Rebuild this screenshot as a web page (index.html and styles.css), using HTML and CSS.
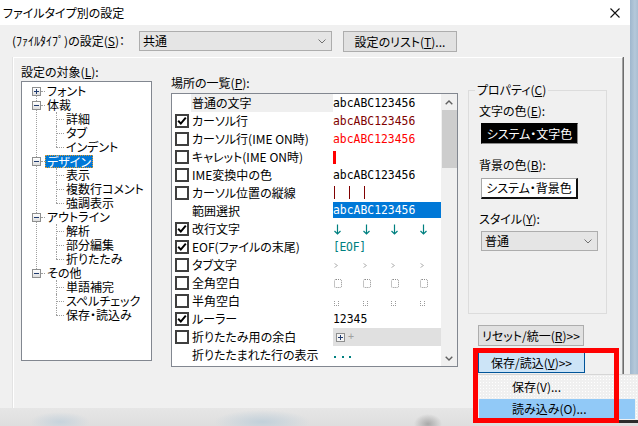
FILE: index.html
```html
<!DOCTYPE html>
<html lang="ja">
<head>
<meta charset="utf-8">
<title>ファイルタイプ別の設定</title>
<link rel="stylesheet" href="styles.css">
</head>
<body>
<div class="screen">
  <div class="upper">
    <div class="window">
      <div class="titlebar">
        <span class="title">ファイルタイプ別の設定</span>
        <svg class="close" width="10" height="10" viewBox="0 0 10 10"><path d="M0.5 0.5L9.5 9.5M9.5 0.5L0.5 9.5" stroke="#111" stroke-width="1.1" fill="none"/></svg>
      </div>
      <div class="client">
        <div class="toprow">
          <span class="toplabel">(ﾌｧｲﾙﾀｲﾌﾟ)の設定(<u>S</u>)：</span>
          <div class="combo type-combo"><span>共通</span><svg width="8" height="5" viewBox="0 0 8 5"><polyline points="0.5,0.5 4,4 7.5,0.5" fill="none" stroke="#707070"/></svg></div>
          <div class="btn list-btn">設定のリスト(<u>T</u>)...</div>
        </div>
        <div class="sheet">
          <div class="col-tree">
            <div class="lbl">設定の対象(<u>L</u>):</div>
            <div class="tree">
              <ul class="roots">
                <li class="root">
                  <div class="trow"><span class="exp plus"></span><span class="conn"></span><span class="tlabel">フォント</span></div>
                </li>
                <li class="root">
                  <div class="trow"><span class="exp minus"></span><span class="conn"></span><span class="tlabel">体裁</span></div>
                  <ul class="kids"><li>詳細</li><li>タブ</li><li>インデント</li></ul>
                </li>
                <li class="root">
                  <div class="trow"><span class="exp minus"></span><span class="conn"></span><span class="tlabel selected">デザイン</span></div>
                  <ul class="kids"><li>表示</li><li>複数行コメント</li><li>強調表示</li></ul>
                </li>
                <li class="root">
                  <div class="trow"><span class="exp minus"></span><span class="conn"></span><span class="tlabel">アウトライン</span></div>
                  <ul class="kids"><li>解析</li><li>部分編集</li><li>折りたたみ</li></ul>
                </li>
                <li class="root">
                  <div class="trow"><span class="exp minus"></span><span class="conn"></span><span class="tlabel">その他</span></div>
                  <ul class="kids"><li>単語補完</li><li>スペルチェック</li><li>保存・読込み</li></ul>
                </li>
              </ul>
            </div>
          </div>

          <div class="col-list">
            <div class="lbl">場所の一覧(<u>P</u>):</div>
            <div class="listbox">
              <div class="rows">
                <div class="row"><span class="cb none"></span><span class="name focus">普通の文字</span><span class="sample">abcABC123456</span></div>
                <div class="row"><span class="cb on"><svg width="10" height="10" viewBox="0 0 10 10"><polyline points="1.2,4.8 3.8,7.6 8.8,1.6" fill="none" stroke="#000" stroke-width="2"/></svg></span><span class="name">カーソル行</span><span class="sample dred">abcABC123456</span></div>
                <div class="row"><span class="cb"></span><span class="name">カーソル行(IME ON時)</span><span class="sample red">abcABC123456</span></div>
                <div class="row"><span class="cb"></span><span class="name">キャレット(IME ON時)</span><span class="sample"><span class="caret"></span></span></div>
                <div class="row"><span class="cb"></span><span class="name">IME変換中の色</span><span class="sample">abcABC123456</span></div>
                <div class="row"><span class="cb"></span><span class="name">カーソル位置の縦線</span><span class="sample vlines"><span class="vl"></span><span class="vl"></span><span class="vl"></span></span></div>
                <div class="row"><span class="cb none"></span><span class="name">範囲選択</span><span class="sample selbg">abcABC123456</span></div>
                <div class="row"><span class="cb on"><svg width="10" height="10" viewBox="0 0 10 10"><polyline points="1.2,4.8 3.8,7.6 8.8,1.6" fill="none" stroke="#000" stroke-width="2"/></svg></span><span class="name">改行文字</span><span class="sample ticks">
                  <span class="tick"><svg width="7" height="11" viewBox="0 0 7 11"><path d="M3.5 0.5V10M0.5 7L3.5 10L6.5 7" fill="none" stroke="#008080" stroke-width="1.2"/></svg></span>
                  <span class="tick"><svg width="7" height="11" viewBox="0 0 7 11"><path d="M3.5 0.5V10M0.5 7L3.5 10L6.5 7" fill="none" stroke="#008080" stroke-width="1.2"/></svg></span>
                  <span class="tick"><svg width="7" height="11" viewBox="0 0 7 11"><path d="M3.5 0.5V10M0.5 7L3.5 10L6.5 7" fill="none" stroke="#008080" stroke-width="1.2"/></svg></span>
                  <span class="tick"><svg width="7" height="11" viewBox="0 0 7 11"><path d="M3.5 0.5V10M0.5 7L3.5 10L6.5 7" fill="none" stroke="#008080" stroke-width="1.2"/></svg></span>
                </span></div>
                <div class="row"><span class="cb on"><svg width="10" height="10" viewBox="0 0 10 10"><polyline points="1.2,4.8 3.8,7.6 8.8,1.6" fill="none" stroke="#000" stroke-width="2"/></svg></span><span class="name">EOF(ファイルの末尾)</span><span class="sample teal">[EOF]</span></div>
                <div class="row"><span class="cb"></span><span class="name">タブ文字</span><span class="sample ticks">
                  <span class="tick"><svg width="4" height="5" viewBox="0 0 4 5"><polyline points="0.5,0.5 3.5,2.5 0.5,4.5" fill="none" stroke="#b4b4b4"/></svg></span>
                  <span class="tick"><svg width="4" height="5" viewBox="0 0 4 5"><polyline points="0.5,0.5 3.5,2.5 0.5,4.5" fill="none" stroke="#b4b4b4"/></svg></span>
                  <span class="tick"><svg width="4" height="5" viewBox="0 0 4 5"><polyline points="0.5,0.5 3.5,2.5 0.5,4.5" fill="none" stroke="#b4b4b4"/></svg></span>
                  <span class="tick"><svg width="4" height="5" viewBox="0 0 4 5"><polyline points="0.5,0.5 3.5,2.5 0.5,4.5" fill="none" stroke="#b4b4b4"/></svg></span>
                </span></div>
                <div class="row"><span class="cb"></span><span class="name">全角空白</span><span class="sample ticks">
                  <span class="tick"><span class="zsp"></span></span>
                  <span class="tick"><span class="zsp"></span></span>
                  <span class="tick"><span class="zsp"></span></span>
                  <span class="tick"><span class="zsp"></span></span>
                </span></div>
                <div class="row"><span class="cb"></span><span class="name">半角空白</span><span class="sample ticks low">
                  <span class="tick"><svg width="5" height="5" viewBox="0 0 5 5"><path d="M0 0h1v1H0zM0 2h1v1H0zM0 4h1v1H0zM2 4h1v1H2zM4 4h1v1H4zM4 2h1v1H4zM4 0h1v1H4z" fill="#9a9a9a"/></svg></span>
                  <span class="tick"><svg width="5" height="5" viewBox="0 0 5 5"><path d="M0 0h1v1H0zM0 2h1v1H0zM0 4h1v1H0zM2 4h1v1H2zM4 4h1v1H4zM4 2h1v1H4zM4 0h1v1H4z" fill="#9a9a9a"/></svg></span>
                  <span class="tick"><svg width="5" height="5" viewBox="0 0 5 5"><path d="M0 0h1v1H0zM0 2h1v1H0zM0 4h1v1H0zM2 4h1v1H2zM4 4h1v1H4zM4 2h1v1H4zM4 0h1v1H4z" fill="#9a9a9a"/></svg></span>
                  <span class="tick"><svg width="5" height="5" viewBox="0 0 5 5"><path d="M0 0h1v1H0zM0 2h1v1H0zM0 4h1v1H0zM2 4h1v1H2zM4 4h1v1H4zM4 2h1v1H4zM4 0h1v1H4z" fill="#9a9a9a"/></svg></span>
                </span></div>
                <div class="row"><span class="cb on"><svg width="10" height="10" viewBox="0 0 10 10"><polyline points="1.2,4.8 3.8,7.6 8.8,1.6" fill="none" stroke="#000" stroke-width="2"/></svg></span><span class="name">ルーラー</span><span class="sample">12345</span></div>
                <div class="row"><span class="cb"></span><span class="name">折りたたみ用の余白</span><span class="sample foldbg"><span class="foldbox"></span><span class="foldplus">+</span></span></div>
                <div class="row"><span class="cb none"></span><span class="name">折りたたまれた行の表示</span><span class="sample dots"><span class="dot"></span><span class="dot"></span><span class="dot"></span></span></div>
              </div>
              <div class="vscroll">
                <div class="sb-arrow"><svg width="8" height="5" viewBox="0 0 8 5"><polyline points="0.7,4.3 4,1 7.3,4.3" fill="none" stroke="#606060" stroke-width="1.4"/></svg></div>
                <div class="thumb"></div>
                <div class="track"></div>
                <div class="sb-arrow"><svg width="8" height="5" viewBox="0 0 8 5"><polyline points="0.7,0.7 4,4 7.3,0.7" fill="none" stroke="#606060" stroke-width="1.4"/></svg></div>
              </div>
            </div>
          </div>

          <div class="col-prop">
            <fieldset class="group">
              <legend>プロパティ(<u>C</u>)</legend>
              <div class="plabel first">文字の色(<u>E</u>):</div>
              <div class="colorbtn black">システム・文字色</div>
              <div class="plabel second">背景の色(<u>B</u>):</div>
              <div class="colorbtn white">システム・背景色</div>
              <div class="plabel third">スタイル(<u>Y</u>):</div>
              <div class="combo style-combo"><span>普通</span><svg width="8" height="5" viewBox="0 0 8 5"><polyline points="0.5,0.5 4,4 7.5,0.5" fill="none" stroke="#707070"/></svg></div>
            </fieldset>
            <div class="btn reset-btn">リセット/統一(<u>R</u>)&gt;&gt;</div>
            <div class="btn save-btn">保存/読込(<u>V</u>)&gt;&gt;</div>
          </div>
        </div>
      </div>
    </div>
    <div class="side-strip"></div>
  </div>
  <div class="bottom-band"></div>
</div>

<div class="menu">
  <div class="mitem">保存(V)...</div>
  <div class="mitem hot">読み込み(O)...</div>
</div>
<div class="redbox"></div>
</body>
</html>
```

FILE: styles.css
```css
html, body {
  margin: 0;
  padding: 0;
}
body {
  width: 638px;
  height: 426px;
  overflow: hidden;
  position: relative;
  font-family: "Noto Sans CJK JP", "Noto Sans", sans-serif;
  font-size: 12px;
  line-height: 14px;
  font-feature-settings: "palt";
  color: #000;
}
u {
  text-decoration: underline;
  text-underline-offset: 1px;
}
.screen {
  display: flex;
  flex-direction: column;
  width: 638px;
  height: 426px;
}
.upper {
  display: flex;
  height: 408px;
}
.window {
  width: 630px;
  height: 408px;
  overflow: hidden;
  background: #f0f0f0;
  display: flex;
  flex-direction: column;
}
.side-strip {
  width: 8px;
  background: linear-gradient(90deg, #9fb7cd, #b5c8da 60%, #a9bed2);
}
.bottom-band {
  height: 18px;
  background:
    radial-gradient(ellipse 30px 10px at 60px 14px, #c7d3dc, rgba(199,211,220,0) 100%),
    radial-gradient(ellipse 48px 12px at 262px 14px, #c2d0da, rgba(194,208,218,0) 100%),
    radial-gradient(ellipse 14px 10px at 428px 16px, #a9a9a9, rgba(169,169,169,0) 100%),
    linear-gradient(#e6e6e6, #dedede);
}

/* title bar */
.titlebar {
  height: 25px;
  background: #fff;
  display: flex;
  align-items: center;
  justify-content: space-between;
  padding: 0 10px 0 3px;
  flex: none;
}
.title {
  font-size: 12px;
  line-height: 14px;
}
.close {
  display: block;
}

/* client */
.client {
  flex: 1;
  padding: 6px 0 0 12px;
}
.toprow {
  display: flex;
  align-items: flex-start;
  height: 21px;
}
.toplabel {
  width: 127px;
  line-height: 20px;
  white-space: nowrap;
}
.combo {
  box-sizing: border-box;
  height: 20px;
  background: #e5e5e5;
  border: 1px solid #adadad;
  display: flex;
  align-items: center;
  justify-content: space-between;
  padding: 0 5px 0 3px;
}
.type-combo {
  width: 193px;
}
.btn {
  box-sizing: border-box;
  height: 21px;
  background: #e1e1e1;
  border: 1px solid #adadad;
  display: flex;
  align-items: center;
  justify-content: center;
  white-space: nowrap;
}
.list-btn {
  width: 114px;
  margin-left: 11px;
}

/* property sheet panel */
.sheet {
  margin: 5px 0 0 1px;
  width: 610px;
  height: 380px;
  box-sizing: border-box;
  border-top: 1px solid #fff;
  border-left: 1px solid #fff;
  border-right: 1px solid #a0a0a0;
  box-shadow: 1px 0 0 #6d6d6d, -1px 0 0 #e3e3e3;
  display: flex;
  align-items: flex-start;
  padding-left: 7px;
}
.lbl {
  white-space: nowrap;
}

/* tree */
.col-tree {
  width: 131px;
  padding-top: 7px;
}
.tree {
  margin-top: 2px;
  width: 131px;
  height: 280px;
  box-sizing: border-box;
  border: 1px solid #828790;
  background: #fff;
  padding: 2px 0 0 10px;
}
.roots, .kids {
  list-style: none;
  margin: 0;
  padding: 0;
}
.root {
  position: relative;
}
.root:not(:last-child)::after {
  content: "";
  position: absolute;
  left: 4px;
  top: 7px;
  bottom: -7px;
  border-left: 1px dotted #a0a0a0;
}
.trow {
  display: flex;
  align-items: center;
  height: 14px;
  position: relative;
  z-index: 1;
}
.exp {
  width: 9px;
  height: 9px;
  box-sizing: border-box;
  border: 1px solid #8e8f8f;
  background: linear-gradient(#ffffff, #dedede);
  position: relative;
  flex: none;
}
.exp::before {
  content: "";
  position: absolute;
  left: 1px;
  top: 3px;
  width: 5px;
  height: 1px;
  background: #203b6e;
}
.exp.plus::after {
  content: "";
  position: absolute;
  left: 3px;
  top: 1px;
  width: 1px;
  height: 5px;
  background: #203b6e;
}
.conn {
  width: 4px;
  height: 0;
  border-top: 1px dotted #a0a0a0;
  flex: none;
}
.tlabel {
  margin-left: 2px;
  white-space: nowrap;
}
.tlabel.selected {
  margin-left: 0;
  padding: 0 1px;
  border: 1px dotted #e09a2a;
  background: #0078d7;
  color: #fff;
  line-height: 11px;
  height: 11px;
}
.kids {
  padding-left: 24px;
}
.kids li {
  position: relative;
  height: 14px;
  line-height: 14px;
  padding-left: 10px;
  white-space: nowrap;
}
.kids li::before {
  content: "";
  position: absolute;
  left: 0;
  top: 7px;
  width: 8px;
  border-top: 1px dotted #a0a0a0;
}
.kids li::after {
  content: "";
  position: absolute;
  left: 0;
  top: 0;
  height: 14px;
  border-left: 1px dotted #a0a0a0;
}
.kids li:last-child::after {
  height: 7px;
}

/* list */
.col-list {
  width: 287px;
  margin-left: 19px;
  padding-top: 18px;
}
.listbox {
  margin-top: 3px;
  width: 287px;
  height: 274px;
  box-sizing: border-box;
  border: 1px solid #828790;
  background: #fff;
  display: flex;
}
.rows {
  width: 269px;
}
.row {
  display: flex;
  align-items: center;
  height: 18px;
  padding-left: 3px;
}
.cb {
  width: 14px;
  height: 14px;
  box-sizing: border-box;
  border: 2px solid #3f3f3f;
  background: #fff;
  flex: none;
  display: flex;
  align-items: center;
  justify-content: center;
}
.cb svg {
  display: block;
}
.cb.none {
  border: none;
  background: none;
}
.name {
  width: 142px;
  box-sizing: border-box;
  margin-left: 2px;
  padding-left: 1px;
  height: 18px;
  line-height: 18px;
  white-space: nowrap;
  flex: none;
}
.name.focus {
  background: #efefef;
}
.sample {
  width: 108px;
  height: 18px;
  display: flex;
  align-items: center;
  font-family: "DejaVu Sans Mono", "Liberation Mono", monospace;
  font-size: 11.4px;
  font-feature-settings: normal;
  white-space: nowrap;
  flex: none;
}
.dred { color: #800000; }
.red { color: #ff0000; }
.teal { color: #008080; letter-spacing: -0.3px; }
.caret {
  width: 3px;
  height: 13px;
  background: #ff0000;
}
.vlines {
  align-items: flex-start;
  padding-left: 1px;
  box-sizing: border-box;
}
.vl {
  width: 1px;
  height: 13px;
  margin-top: 2px;
  background: #800000;
  margin-right: 14px;
}
.selbg {
  align-self: flex-start;
  height: 16px;
  background: #0078d7;
  color: #fff;
}
.ticks {
  padding-left: 1px;
  box-sizing: border-box;
}
.tick {
  width: 28.5px;
  display: flex;
  align-items: center;
  flex: none;
}
.tick svg {
  display: block;
}
.ticks.low .tick {
  margin-top: 5px;
}
.zsp {
  width: 8px;
  height: 9px;
  box-sizing: border-box;
  border: 1px dotted #8a8a8a;
  border-radius: 2px;
}
.foldbg {
  background: #e0e0e0;
  padding-left: 3px;
  box-sizing: border-box;
}
.foldbox {
  width: 9px;
  height: 9px;
  box-sizing: border-box;
  border: 1px solid #8e8f8f;
  background: #f4f4f4;
  position: relative;
}
.foldbox::before {
  content: "";
  position: absolute;
  left: 1px;
  top: 3px;
  width: 5px;
  height: 1px;
  background: #203b6e;
}
.foldbox::after {
  content: "";
  position: absolute;
  left: 3px;
  top: 1px;
  width: 1px;
  height: 5px;
  background: #203b6e;
}
.foldplus {
  margin-left: 3px;
  color: #a0a0a0;
  font-size: 10px;
}
.dots {
  padding-left: 1px;
  box-sizing: border-box;
  padding-top: 4px;
}
.dot {
  width: 2px;
  height: 2px;
  background: #008080;
  margin-right: 5.5px;
}

/* scrollbar */
.vscroll {
  width: 16px;
  background: #f0f0f0;
  display: flex;
  flex-direction: column;
}
.sb-arrow {
  height: 16px;
  display: flex;
  align-items: center;
  justify-content: center;
  flex: none;
}
.thumb {
  height: 58px;
  margin: 0 0 0 1px;
  width: 15px;
  background: #cdcdcd;
  flex: none;
}
.track {
  flex: 1;
}

/* properties */
.col-prop {
  width: 139px;
  margin-left: 10px;
  margin-top: 25px;
}
.group {
  margin: 0;
  padding: 0 10px;
  border: 1px solid #dcdcdc;
  height: 231px;
  box-sizing: border-box;
  min-width: 0;
}
.group legend {
  padding: 0 2px;
  margin-left: -4px;
  line-height: 14px;
}
.plabel {
  white-space: nowrap;
}
.plabel.first { margin-top: 7px; }
.plabel.second { margin-top: 14px; }
.plabel.third { margin-top: 13px; }
.colorbtn {
  width: 97px;
  height: 21px;
  box-sizing: border-box;
  margin: 5px 0 0 2px;
  display: flex;
  align-items: center;
  justify-content: center;
  white-space: nowrap;
}
.colorbtn.black {
  background: #000;
  color: #fff;
  border: 1px solid #000;
  border-right-color: #8a8a8a;
  border-bottom-color: #8a8a8a;
}
.colorbtn.white {
  margin-top: 6px;
  background: #fff;
  border: 1px solid #a8a8a8;
  border-right: 2px solid #111;
  border-bottom: 2px solid #111;
}
.style-combo {
  width: 117px;
  margin: 5px 0 0 2px;
}
.reset-btn {
  width: 106px;
  margin: 11px 0 0 10px;
}
.save-btn {
  width: 107px;
  margin: 6px 0 0 10px;
  background: #cce4f7;
  border-color: #005499;
}

/* popup menu */
.menu {
  position: absolute;
  left: 476px;
  top: 374px;
  width: 162px;
  height: 49px;
  box-sizing: border-box;
  border-top: 1px solid #d6d6d6;
  border-bottom: 3px solid #2b2b2b;
  background-color: #f0f0f0;
  background-image: radial-gradient(circle, #ffffff 0.6px, rgba(255,255,255,0) 0.9px);
  background-size: 3px 3px;
  padding-top: 2px;
}
.mitem {
  height: 20px;
  line-height: 20px;
  margin-left: 3px;
  margin-right: 3px;
  padding-left: 33px;
  white-space: nowrap;
}
.mitem.hot {
  margin-top: 2px;
  background: #91c9f7;
}
.redbox {
  position: absolute;
  left: 473px;
  top: 348px;
  width: 146px;
  height: 75px;
  box-sizing: border-box;
  border: 5px solid #ff0000;
}
```
